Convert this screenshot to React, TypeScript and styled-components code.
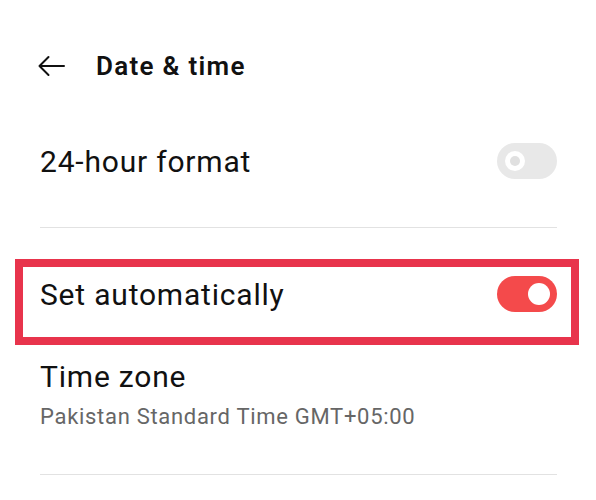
import React from "react";
import styled, { createGlobalStyle } from "styled-components";

const GlobalStyle = createGlobalStyle`
  html, body {
    margin: 0;
    padding: 0;
    background: #fff;
  }
  body {
    font-family: Roboto, "Noto Sans", sans-serif;
    color: #111;
  }
`;

const Page = styled.div`
  width: 596px;
  height: 500px;
  overflow: hidden;
  background: #fff;
  padding: 0 39px 0 40px;
  box-sizing: border-box;
`;

const Header = styled.header`
  height: 132px;
  display: flex;
  align-items: center;
  gap: 31px;
  margin-left: -2px;
`;

const BackButton = styled.button`
  display: flex;
  align-items: center;
  padding: 0;
  border: none;
  background: none;
  cursor: pointer;
`;

const Title = styled.h1`
  margin: 0;
  font-size: 26px;
  font-weight: 600;
  color: #111;
  letter-spacing: 1.3px;
`;

const Row = styled.div<{ height: number }>`
  display: flex;
  align-items: center;
  justify-content: space-between;
  height: ${({ height }) => height}px;
`;

const Label = styled.span`
  font-size: 30px;
  font-weight: 400;
  letter-spacing: 0.8px;
  color: #111;
`;

const Divider = styled.hr<{ top: number }>`
  margin: ${({ top }) => top}px 0 0;
  border: none;
  border-top: 1px solid #e2e2e2;
`;

const Highlight = styled.div`
  margin: 31px -22px 0 -25px;
  border: 8px solid #e8344c;
  padding: 0 14px 16px 17px;
`;

const Track = styled.span<{ on: boolean }>`
  width: 60px;
  height: 36px;
  border-radius: 18px;
  background: ${({ on }) => (on ? "#f44a4b" : "#e8e8e8")};
  display: flex;
  align-items: center;
  justify-content: ${({ on }) => (on ? "flex-end" : "flex-start")};
  padding: 0 7px;
  box-sizing: border-box;
`;

const Knob = styled.span<{ on: boolean }>`
  width: ${({ on }) => (on ? 22 : 20)}px;
  height: ${({ on }) => (on ? 22 : 20)}px;
  border-radius: 50%;
  background: #fff;
  display: flex;
  align-items: center;
  justify-content: center;
  margin-left: ${({ on }) => (on ? 0 : 1)}px;

  &::after {
    content: "";
    display: ${({ on }) => (on ? "none" : "block")};
    width: 10px;
    height: 10px;
    border-radius: 50%;
    background: #e0e0e0;
  }
`;

const ZoneBlock = styled.div`
  padding-top: 13px;
`;

const ZoneTitle = styled.div`
  font-size: 30px;
  line-height: 38px;
  letter-spacing: 0.8px;
  color: #111;
`;

const ZoneSub = styled.div`
  font-size: 22px;
  line-height: 28px;
  letter-spacing: 0.7px;
  margin-top: 7px;
  color: #666;
`;

const Switch = ({ on }: { on: boolean }) => (
  <Track on={on}>
    <Knob on={on} />
  </Track>
);

const App: React.FC = () => {
  return (
    <>
      <GlobalStyle />
      <Page>
        <Header>
          <BackButton aria-label="Back">
            <svg width="27" height="22" viewBox="0 0 27 22" fill="none">
              <path
                d="M26 11H1.5M10.5 2L1.5 11l9 9"
                stroke="#111"
                strokeWidth="2"
                strokeLinecap="round"
                strokeLinejoin="round"
              />
            </svg>
          </BackButton>
          <Title>Date &amp; time</Title>
        </Header>

        <Row height={58}>
          <Label>24-hour format</Label>
          <Switch on={false} />
        </Row>
        <Divider top={37} />

        <Highlight>
          <Row height={54}>
            <Label>Set automatically</Label>
            <Switch on={true} />
          </Row>
        </Highlight>

        <ZoneBlock>
          <ZoneTitle>Time zone</ZoneTitle>
          <ZoneSub>Pakistan Standard Time GMT+05:00</ZoneSub>
        </ZoneBlock>
        <Divider top={43} />
      </Page>
    </>
  );
};

export default App;
